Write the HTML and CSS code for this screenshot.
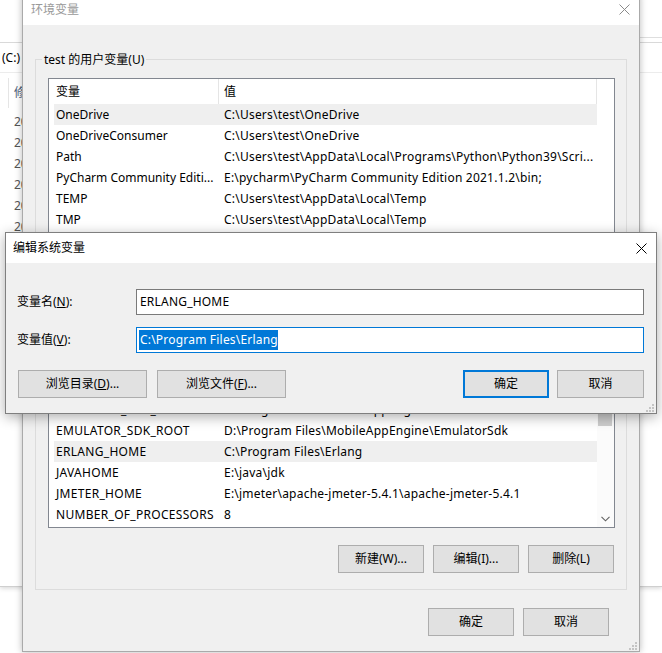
FILE: index.html
```html
<!DOCTYPE html>
<html>
<head>
<meta charset="utf-8">
<title>环境变量</title>
<link rel="stylesheet" href="styles.css">
</head>
<body>
<div class="explorer">
  <div class="ex-ribbon"><div class="ex-ribbon-line"></div></div>
  <div class="ex-addr">(C:)</div>
  <div class="ex-head">修改日期</div>
  <div class="ex-rows">
    <div class="ex-row">2021/4/10 11:17</div>
    <div class="ex-row">2021/4/10 11:20</div>
    <div class="ex-row">2021/3/28 9:41</div>
    <div class="ex-row">2021/3/28 9:43</div>
    <div class="ex-row">2021/2/16 15:02</div>
    <div class="ex-row">2021/2/16 15:07</div>
  </div>
</div>

<div class="win main">
  <div class="titlebar">
    <span class="title inactive">环境变量</span>
    <svg class="close" width="11" height="11" viewBox="0 0 11 11"><path d="M0.5 0.5 L10.5 10.5 M10.5 0.5 L0.5 10.5" stroke="#8a8a8a" stroke-width="1" fill="none"/></svg>
  </div>
  <div class="main-body">
    <fieldset class="group group-user">
      <legend>test 的用户变量(U)</legend>
      <div class="listview lv-user">
        <div class="lv-main">
          <div class="lv-header">
            <div class="hcell h1">变量</div>
            <div class="hcell h2">值</div>
          </div>
          <div class="lv-rows">
            <div class="row sel"><span class="c1">OneDrive</span><span class="c2">C:\Users\test\OneDrive</span></div>
            <div class="row"><span class="c1">OneDriveConsumer</span><span class="c2">C:\Users\test\OneDrive</span></div>
            <div class="row"><span class="c1">Path</span><span class="c2">C:\Users\test\AppData\Local\Programs\Python\Python39\Scri...</span></div>
            <div class="row"><span class="c1">PyCharm Community Editi...</span><span class="c2">E:\pycharm\PyCharm Community Edition 2021.1.2\bin;</span></div>
            <div class="row"><span class="c1">TEMP</span><span class="c2">C:\Users\test\AppData\Local\Temp</span></div>
            <div class="row"><span class="c1">TMP</span><span class="c2">C:\Users\test\AppData\Local\Temp</span></div>
          </div>
        </div>
        <div class="lv-side"></div>
      </div>
      <div class="btn-row group-btns">
        <div class="btn">新建(N)...</div>
        <div class="btn">编辑(E)...</div>
        <div class="btn">删除(D)</div>
      </div>
    </fieldset>

    <fieldset class="group group-sys">
      <legend>系统变量(S)</legend>
      <div class="listview lv-sys">
        <div class="lv-main">
          <div class="lv-header">
            <div class="hcell h1">变量</div>
            <div class="hcell h2">值</div>
          </div>
          <div class="lv-rows bottom">
            <div class="row"><span class="c1">ComSpec</span><span class="c2">C:\Windows\system32\cmd.exe</span></div>
            <div class="row"><span class="c1">DriverData</span><span class="c2">C:\Windows\System32\Drivers\DriverData</span></div>
            <div class="row"><span class="c1">EMULATOR_SDK_PATH</span><span class="c2">D:\Program Files\MobileAppEngine\EmulatorSdk</span></div>
            <div class="row"><span class="c1">EMULATOR_SDK_ROOT</span><span class="c2">D:\Program Files\MobileAppEngine\EmulatorSdk</span></div>
            <div class="row sel"><span class="c1">ERLANG_HOME</span><span class="c2">C:\Program Files\Erlang</span></div>
            <div class="row"><span class="c1">JAVAHOME</span><span class="c2">E:\java\jdk</span></div>
            <div class="row"><span class="c1">JMETER_HOME</span><span class="c2">E:\jmeter\apache-jmeter-5.4.1\apache-jmeter-5.4.1</span></div>
            <div class="row"><span class="c1">NUMBER_OF_PROCESSORS</span><span class="c2">8</span></div>
          </div>
        </div>
        <div class="lv-side scrollbar">
          <div class="sb-up"></div>
          <div class="sb-thumb"></div>
          <div class="sb-track"></div>
          <div class="sb-down">
            <svg width="9" height="6" viewBox="0 0 9 6"><path d="M0.5 0.8 L4.5 4.8 L8.5 0.8" stroke="#606060" stroke-width="1.1" fill="none"/></svg>
          </div>
        </div>
      </div>
      <div class="btn-row group-btns sys-btns">
        <div class="btn">新建(W)...</div>
        <div class="btn">编辑(I)...</div>
        <div class="btn">删除(L)</div>
      </div>
    </fieldset>

    <div class="btn-row footer-btns">
      <div class="btn">确定</div>
      <div class="btn">取消</div>
    </div>
  </div>
  <svg class="grip" width="9" height="9" viewBox="0 0 9 9"><g fill="#c4c4c4"><rect x="7" y="1" width="2" height="2"/><rect x="4" y="4" width="2" height="2"/><rect x="7" y="4" width="2" height="2"/><rect x="1" y="7" width="2" height="2"/><rect x="4" y="7" width="2" height="2"/><rect x="7" y="7" width="2" height="2"/></g></svg>
</div>

<div class="win dialog">
  <div class="titlebar">
    <span class="title">编辑系统变量</span>
    <svg class="close" width="11" height="11" viewBox="0 0 11 11"><path d="M0.5 0.5 L10.5 10.5 M10.5 0.5 L0.5 10.5" stroke="#000" stroke-width="1" fill="none"/></svg>
  </div>
  <div class="dlg-body">
    <div class="field">
      <label class="flabel">变量名(<u>N</u>):</label>
      <div class="input">ERLANG_HOME</div>
    </div>
    <div class="field field2">
      <label class="flabel">变量值(<u>V</u>):</label>
      <div class="input focused"><span class="selected">C:\Program Files\Erlang</span></div>
    </div>
    <div class="btn-row dlg-btns">
      <div class="btn wide">浏览目录(<u>D</u>)...</div>
      <div class="btn wide">浏览文件(<u>F</u>)...</div>
      <div class="btn default">确定</div>
      <div class="btn cancel">取消</div>
    </div>
  </div>
  <svg class="grip" width="9" height="9" viewBox="0 0 9 9"><g fill="#c4c4c4"><rect x="7" y="1" width="2" height="2"/><rect x="4" y="4" width="2" height="2"/><rect x="7" y="4" width="2" height="2"/><rect x="1" y="7" width="2" height="2"/><rect x="4" y="7" width="2" height="2"/><rect x="7" y="7" width="2" height="2"/></g></svg>
</div>
</body>
</html>
```

FILE: styles.css
```css
* { box-sizing: border-box; }
html, body { margin: 0; padding: 0; }
body {
  width: 662px;
  height: 653px;
  overflow: hidden;
  position: relative;
  background: #ffffff;
  font-family: "Noto Sans", "Noto Sans CJK SC", sans-serif;
  font-size: 12px;
  color: #000;
}

/* ---------- background explorer window ---------- */
.explorer {
  position: absolute;
  left: 0;
  top: 0;
  width: 662px;
  height: 587px;
  background: #fff;
  border-bottom: 1px solid #cfcfcf;
  box-shadow: 0 1px 5px rgba(0,0,0,0.18);
}
.ex-ribbon {
  height: 43px;
  border-bottom: 1px solid #d9d9d9;
  padding-top: 37px;
}
.ex-ribbon-line {
  height: 1px;
  margin-left: 640px;
  background: #dedede;
}
.ex-addr {
  height: 30px;
  line-height: 29px;
  padding-left: 2px;
  border-bottom: 1px solid #ececec;
}
.ex-head {
  margin: 5px 0 0 8px;
  height: 30px;
  line-height: 30px;
  padding-left: 5px;
  border-left: 1px solid #e5e5e5;
  color: #4c607a;
}
.ex-rows { padding: 3px 0 0 14px; }
.ex-row { height: 21px; line-height: 21px; color: #555; }

/* ---------- windows ---------- */
.win {
  position: absolute;
  display: flex;
  flex-direction: column;
  background: #f0f0f0;
}
.main {
  left: 22px;
  top: -6px;
  width: 618px;
  height: 658px;
  border: 1px solid #aaaaaa;
  box-shadow: 0 0 7px rgba(0,0,0,0.28);
}
.dialog {
  left: 5px;
  top: 232px;
  width: 652px;
  height: 182px;
  border: 1px solid #7f7f7f;
  box-shadow: 0 3px 12px rgba(0,0,0,0.32);
}
.titlebar {
  flex: none;
  height: 30px;
  background: #fff;
  display: flex;
  align-items: center;
  justify-content: space-between;
  padding-left: 8px;
}
.dialog .titlebar { padding-left: 7px; }
.title { line-height: 16px; }
.title.inactive { color: #999; }
.close { display: block; margin-right: 9px; }
.main .close { margin-top: -1px; }
.grip { position: absolute; right: 2px; bottom: 1px; }

/* ---------- main window body ---------- */
.main-body {
  flex: 1;
  padding: 26px 12px 0 12px;
  display: flex;
  flex-direction: column;
}
.group {
  margin: 0;
  min-width: 0;
  border: 1px solid #dcdcdc;
  padding: 10px 11px 10px 12px;
}
.group legend {
  padding: 0 2px;
  margin-left: -6px;
  line-height: 17px;
}
.group-sys { margin-top: 0; padding-bottom: 16px; }

.listview {
  display: flex;
  border: 1px solid #828790;
  background: #fff;
}
.lv-user { height: 162px; }
.lv-sys { height: 212px; }
.lv-main {
  width: 548px;
  display: flex;
  flex-direction: column;
  min-height: 0;
}
.lv-side { width: 17px; }
.lv-header { display: flex; height: 25px; flex: none; }
.hcell {
  line-height: 25px;
  border-right: 1px solid #e5e5e5;
  white-space: nowrap;
}
.h1 { width: 170px; padding-left: 7px; }
.h2 { width: 378px; padding-left: 5px; }
.lv-rows {
  flex: 1;
  min-height: 0;
  overflow: hidden;
  padding-left: 5px;
  display: flex;
  flex-direction: column;
}
.lv-rows.bottom { justify-content: flex-end; padding-bottom: 2px; }
.row {
  flex: none;
  display: flex;
  height: 21px;
  line-height: 21px;
  white-space: nowrap;
}
.row.sel { background: #efefef; }
.c1 { width: 164px; padding-left: 2px; overflow: hidden; }
.c2 { flex: 1; padding-left: 6px; overflow: hidden; letter-spacing: 0.22px; }
.lv-sys .c1 { letter-spacing: 0.3px; }

.scrollbar {
  display: flex;
  flex-direction: column;
  background: #fbfbfb;
}
.sb-up { height: 17px; flex: none; }
.sb-thumb { height: 36px; margin: 56px 2px 0 1px; background: #cdcdcd; flex: none; }
.sb-track { flex: 1; }
.sb-down {
  height: 17px;
  flex: none;
  display: flex;
  align-items: center;
  justify-content: center;
}

/* ---------- buttons ---------- */
.btn-row { display: flex; }
.btn {
  height: 28px;
  width: 86px;
  line-height: 26px;
  text-align: center;
  background: #e1e1e1;
  border: 1px solid #adadad;
  white-space: nowrap;
}
.group-btns { justify-content: flex-end; gap: 9px; margin: 10px 1px 0 0; }
.sys-btns { margin-top: 17px; }
.footer-btns { justify-content: flex-end; gap: 9px; margin: 18px 18px 0 0; }

/* ---------- dialog body ---------- */
.dlg-body {
  flex: 1;
  padding: 26px 12px 0 11px;
}
.field { display: flex; align-items: center; }
.field2 { margin-top: 12px; }
.flabel { width: 119px; flex: none; line-height: 26px; }
.input {
  flex: 1;
  height: 26px;
  border: 1px solid #7a7a7a;
  background: #fff;
  line-height: 20px;
  padding: 2px 3px;
  white-space: nowrap;
  letter-spacing: 0.2px;
}
.input.focused { border-color: #0078d7; padding-left: 2px; }
.selected { background: #0078d7; color: #fff; padding-left: 1px; display: inline-block; }
.dlg-btns { margin: 17px 0 0 1px; }
.btn.wide { width: 129px; margin-right: 10px; }
.btn.default {
  margin-left: auto;
  border: 2px solid #0078d7;
  line-height: 24px;
}
.btn.cancel { width: 87px; margin-left: 8px; }
```
